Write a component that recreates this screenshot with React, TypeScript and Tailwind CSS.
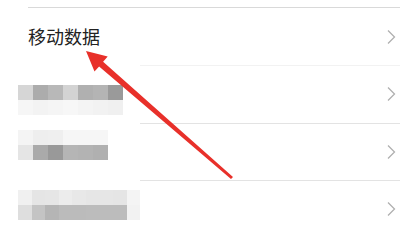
import React from "react";

const rows: { top: number; cells: string[][]; left?: number }[] = [
  {
    top: 20,
    cells: [
      ["#d6d6d6", "#acacac", "#b8b8b8", "#d3d3d3", "#b0b0b0", "#b4b4b4", "#9a9a9a"],
      ["#f6f6f6", "#f3f3f3", "#f5f5f5", "#f7f7f7", "#f4f4f4", "#f2f2f2", "#f0f0f0"],
    ],
  },
  {
    top: 7,
    cells: [
      ["#f4f4f4", "#eeeeee", "#efefef", "#f6f6f6", "#f6f6f6", "#f6f6f6"],
      ["#e5e5e5", "#aaaaaa", "#999999", "#b5b5b5", "#b3b3b3", "#b0b0b0"],
    ],
  },
  {
    top: 10,
    cells: [
      ["#f0f0f0", "#e5e5e5", "#e6e6e6", "#ececec", "#e8e8e8", "#e6e6e6", "#e6e6e6", "#e5e5e5", "#f4f4f4"],
      ["#dedede", "#c4c4c4", "#b5b5b5", "#bbbbbb", "#bbbbbb", "#bcbcbc", "#bcbcbc", "#bcbcbc", "#f2f2f2"],
    ],
  },
];

function Chevron() {
  return (
    <svg width="10" height="16" viewBox="0 0 10 16" className="shrink-0">
      <path d="M2 1.5 L8.5 8 L2 14.5" fill="none" stroke="#b0b0b0" strokeWidth="1.3" />
    </svg>
  );
}

export default function App() {
  return (
    <div
      className="relative w-[408px] h-[236px] overflow-hidden bg-white"
      style={{ fontFamily: '"Noto Sans CJK SC", "Noto Sans", sans-serif' }}
    >
      <div className="pt-[7px]">
        <div className="ml-[28px] mr-[8px] h-[58px] border-t border-[#d9d9d9] flex items-center justify-between pr-[4px]">
          <span className="text-[18px] leading-none text-[#222222] -mt-[1px]">移动数据</span>
          <Chevron />
        </div>
        {rows.map((r, i) => (
          <div key={i} className="relative h-[57.5px]">
            <div
              className={
                "ml-[28px] mr-[8px] h-full border-t flex items-center justify-end pr-[4px] " +
                (i === 0 ? "border-[#f2f2f2]" : "border-[#e3e3e3]")
              }
            >
              <Chevron />
            </div>
            <div className="absolute left-0 top-[-2px] w-[140px] bottom-[-1px] bg-white">
              <div className="flex flex-col pl-[18px]" style={{ paddingTop: r.top + 2 }}>
                {r.cells.map((line, j) => (
                  <div key={j} className="flex">
                    {line.map((c, k) => (
                      <div key={k} className="w-[15px] h-[15px]" style={{ background: c }} />
                    ))}
                  </div>
                ))}
              </div>
            </div>
          </div>
        ))}
      </div>
      <svg className="absolute left-0 top-0" width="408" height="236" viewBox="0 0 408 236">
        <polygon
          points="86,51 107.7,56.6 103.1,61.8 233,176.9 231,179.1 99.1,66.4 94.5,71.6"
          fill="#e8302a"
        />
      </svg>
    </div>
  );
}
